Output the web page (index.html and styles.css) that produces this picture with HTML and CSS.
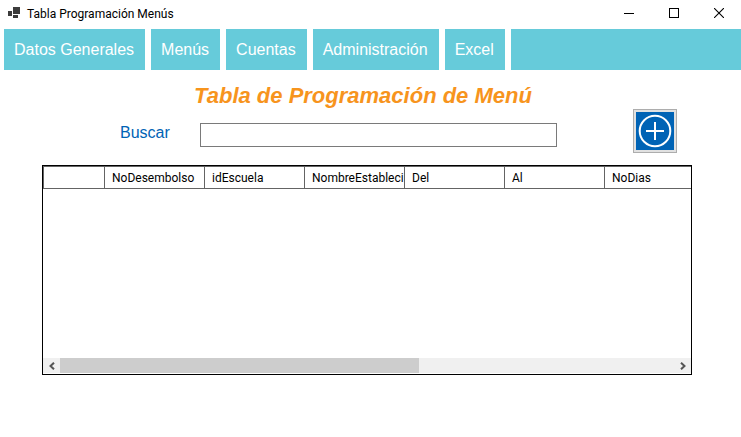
FILE: index.html
```html
<!DOCTYPE html>
<html lang="es">
<head>
  <meta charset="UTF-8" />
  <meta name="viewport" content="width=device-width, initial-scale=1" />
  <title>Tabla Programación Menús</title>
  <link rel="stylesheet" href="styles.css">
</head>
<body>
  <header class="title-bar">
    <svg class="app-icon" width="13" height="12" viewBox="0 0 13 12" shape-rendering="crispEdges" aria-hidden="true">
      <path fill="#3c3c3c" d="M5 0h7v7H5zM0 4h4v5H0zM5 8h5v3H5z"/>
    </svg>
    <span class="window-title">Tabla Programación Menús</span>
    <div class="window-buttons">
      <button type="button" aria-label="Minimizar">
        <svg width="10" height="10" viewBox="0 0 10 10" shape-rendering="crispEdges"><path fill="#000" d="M0 5h10v1H0z"/></svg>
      </button>
      <button type="button" aria-label="Maximizar">
        <svg width="10" height="10" viewBox="0 0 10 10"><rect x=".5" y=".5" width="9" height="9" fill="none" stroke="#000"/></svg>
      </button>
      <button type="button" aria-label="Cerrar">
        <svg width="10" height="10" viewBox="0 0 10 10"><path d="M0 0l10 10M10 0L0 10" stroke="#000" stroke-width="1.1"/></svg>
      </button>
    </div>
  </header>

  <nav class="menu">
    <button type="button">Datos Generales</button>
    <button type="button">Menús</button>
    <button type="button">Cuentas</button>
    <button type="button">Administración</button>
    <button type="button">Excel</button>
    <div class="menu-fill"></div>
  </nav>

  <main>
    <h1>Tabla de Programación de Menú</h1>

    <form class="search">
      <label for="buscar">Buscar</label>
      <input type="text" id="buscar">
      <button type="button" class="add" aria-label="Agregar">
        <svg width="38" height="38" viewBox="0 0 38 38">
          <circle cx="19" cy="19" r="15.3" fill="none" stroke="#fff" stroke-width="2"/>
          <path d="M19 10v18M10 19h18" stroke="#fff" stroke-width="2"/>
        </svg>
      </button>
    </form>

    <div class="grid">
      <div class="grid-view">
        <table>
          <thead>
            <tr>
              <th class="row-header"></th>
              <th>NoDesembolso</th>
              <th>idEscuela</th>
              <th>NombreEstableci</th>
              <th>Del</th>
              <th>Al</th>
              <th>NoDias</th>
            </tr>
          </thead>
        </table>
      </div>
      <div class="scrollbar">
        <button type="button" aria-label="Izquierda">
          <svg width="6" height="8" viewBox="0 0 6 8"><path d="M5 .7L1.500 4L5 7.300" fill="none" stroke="#555" stroke-width="2"/></svg>
        </button>
        <div class="track"><div class="thumb"></div></div>
        <button type="button" aria-label="Derecha">
          <svg width="6" height="8" viewBox="0 0 6 8"><path d="M1 .7L4.500 4L1 7.300" fill="none" stroke="#555" stroke-width="2"/></svg>
        </button>
      </div>
    </div>
  </main>
</body>
</html>
```

FILE: styles.css
```css
:root {
  --cyan: #66cbda;
  --blue: #0063b5;
  --orange: #f7941d;
  --line: #646464;
}

* {
  box-sizing: border-box;
}

body {
  margin: 0;
  background: #fff;
  color: #000;
  font-family: "Liberation Sans", Arial, sans-serif;
}

button {
  margin: 0;
  padding: 0;
  border: none;
  background: none;
  font: inherit;
  color: inherit;
}

svg {
  display: block;
}

.title-bar {
  display: flex;
  align-items: center;
  height: 26px;
  padding-left: 8px;
  font: 12px Roboto, sans-serif;
}

.window-title {
  margin-left: 6px;
  padding-top: 2px;
}

.window-buttons {
  display: flex;
  align-self: stretch;
  margin-left: auto;
}

.window-buttons button {
  display: flex;
  align-items: center;
  justify-content: center;
  width: 45px;
}

.menu {
  display: flex;
  gap: 6px;
  height: 44px;
  padding: 3px 0 0 4px;
}

.menu button {
  padding: 0 11px 0 10px;
  background: var(--cyan);
  color: #fff;
  font-size: 16px;
}

.menu-fill {
  flex: 1;
  background: var(--cyan);
}

main {
  padding: 13px 49px 0 42px;
}

h1 {
  margin: 0;
  padding-right: 8px;
  color: var(--orange);
  font-size: 22px;
  font-style: italic;
  line-height: 26px;
  text-align: center;
}

.search {
  display: flex;
  align-items: center;
  padding: 0 15px 12px 78px;
}

.search label {
  width: 80px;
  padding-top: 4px;
  color: var(--blue);
  font-size: 16px;
}

.search input {
  flex: 1;
  min-width: 0;
  height: 24px;
  margin-top: 7px;
  margin-right: 76px;
  padding: 0 4px;
  border: 1px solid #7a7a7a;
  border-radius: 0;
}

.add {
  padding: 2px;
  border: 1px solid #adadad;
  background: #e1e1e1;
}

.add svg {
  background: var(--blue);
}

.grid {
  border: 1px solid #000;
}

.grid-view {
  height: 192px;
  overflow: hidden;
}

table {
  width: 662px;
  table-layout: fixed;
  border-collapse: collapse;
}

th {
  width: 100px;
  height: 22px;
  padding: 0 0 0 7px;
  border: 1px solid var(--line);
  font: 12px Roboto, sans-serif;
  text-align: left;
  white-space: nowrap;
  overflow: hidden;
}

.row-header {
  width: 61px;
}

.scrollbar {
  display: flex;
  height: 16px;
  background: #f0f0f0;
  border-bottom: 1px solid #fff;
}

.scrollbar button {
  display: flex;
  align-items: center;
  justify-content: center;
  width: 17px;
}

.track {
  flex: 1;
}

.thumb {
  width: 58.5%;
  height: 100%;
  background: #cdcdcd;
}
```
